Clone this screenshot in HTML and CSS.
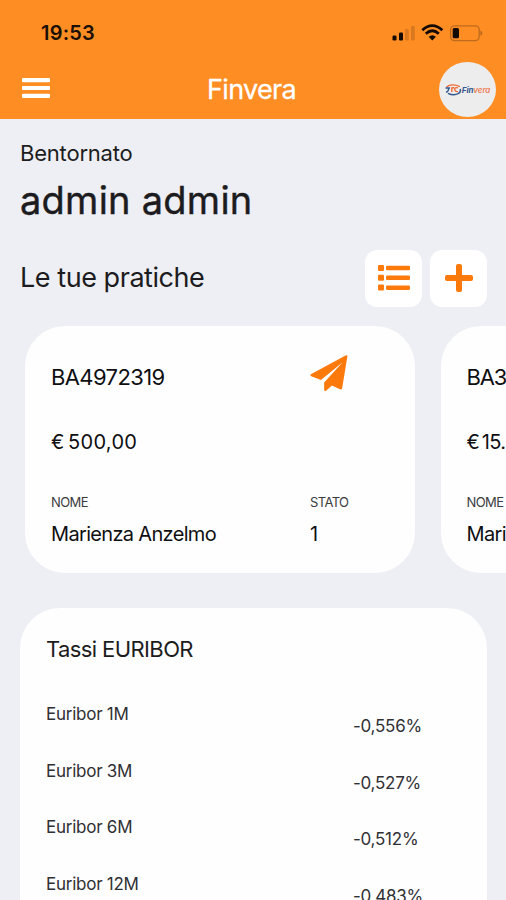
FILE: index.html
```html
<!DOCTYPE html>
<html lang="it">
<head>
<meta charset="utf-8">
<title>Finvera</title>
<link rel="stylesheet" href="styles.css">
</head>
<body>
<header class="header">
  <div class="status">
    <span class="clock">19:53</span>
    <svg class="status-icons" width="92" height="20" viewBox="0 0 92 20">
      <g fill="#130b03">
        <rect x="1.5" y="12.5" width="4" height="5" rx="1.3"/>
        <rect x="8" y="9.5" width="4" height="8" rx="1.2"/>
      </g>
      <g fill="#d8781f">
        <rect x="14" y="6" width="3.7" height="11.5" rx="1.2"/>
        <rect x="20" y="3" width="3.7" height="14.5" rx="1.2"/>
      </g>
      <g fill="none" stroke="#130b03" stroke-width="2.8">
        <path d="M31.3 7.3Q41.3-2 51.3 7.3"/>
        <path d="M34.8 10.8Q41.3 4.8 47.8 10.8"/>
      </g>
      <path d="M37.7 13.7Q41.3 10.7 44.9 13.7L41.3 17.4Z" fill="#130b03"/>
      <rect x="59.6" y="2.8" width="28.6" height="14.8" rx="4" fill="none" stroke="#bd6a1d" stroke-width="1.3"/>
      <rect x="61.7" y="5" width="6.3" height="10.2" rx="1.5" fill="#130b03"/>
      <path d="M89.4 7.5v5.4q1.9-.8 1.9-2.7t-1.9-2.7Z" fill="#bd6a1d"/>
    </svg>
  </div>
  <nav class="nav">
    <svg class="burger" width="28" height="20" viewBox="0 0 28 20" fill="#fff">
      <rect width="28" height="4.2" rx="1"/><rect y="7.9" width="28" height="4.2" rx="1"/><rect y="15.8" width="28" height="4.2" rx="1"/>
    </svg>
    <h1 class="title">Finvera</h1>
    <div class="avatar">
      <svg width="17" height="12" viewBox="0 0 17 12" fill="none">
        <path d="M1.5 3Q4.5.6 8.5.9T14.8 2.7" stroke="#ee6b35" stroke-width="1.4"/>
        <path d="M.5 4H5M3.8 4Q3.4 8 1 8.2" stroke="#31588f" stroke-width="1.5"/>
        <path d="M6.8 3.2V8M6.8 3.8H9M12.8 3.7Q9.3 3.1 9.7 5.5T13 7.6" stroke="#ee6b35" stroke-width="1.4"/>
        <path d="M3 9.3Q8.5 12 13.2 9.7Q16.2 8 15.2 5" stroke="#31588f" stroke-width="1.5"/>
      </svg>
      <span class="brand">Fin<b>vera</b></span>
    </div>
  </nav>
</header>
<main>
  <p class="welcome">Bentornato</p>
  <h2 class="user">admin admin</h2>
  <div class="section-head">
    <h3 class="section-title">Le tue pratiche</h3>
    <div class="actions">
      <button class="action" aria-label="Elenco">
        <svg width="32" height="26" viewBox="0 0 32 26" fill="#fc7a0c">
          <rect width="6" height="6" rx="1"/><rect y="9.8" width="6" height="6" rx="1"/><rect y="19.6" width="6" height="6" rx="1"/>
          <rect x="8" y=".8" width="24" height="4.5" rx="1.3"/><rect x="8" y="10.6" width="24" height="4.5" rx="1.3"/><rect x="8" y="20.4" width="24" height="4.5" rx="1.3"/>
        </svg>
      </button>
      <button class="action" aria-label="Aggiungi">
        <svg width="28" height="28" viewBox="0 0 28 28" fill="#fc7a0c">
          <rect x="11" width="6" height="28" rx="2"/><rect y="11" width="28" height="6" rx="2"/>
        </svg>
      </button>
    </div>
  </div>
  <div class="cards">
    <article class="card">
      <div class="card-top">
        <span class="code">BA4972319</span>
        <svg class="plane" width="38" height="37" viewBox="0 0 39 38" fill="#fc7a0c">
          <path d="M37.3.2Q38.8.1 38.3 2L33 34.2Q32.5 36 30.8 35.2L22.5 31.4L16.5 36.7Q14.6 37.6 14.5 35.6V28.3L33.5 7.4L11.2 25.8L1.3 21.8Q-.6 20.7 1.3 19.6L36 .7Z"/>
        </svg>
      </div>
      <div class="amount">€ 500,00</div>
      <div class="fields">
        <div class="field"><span class="label">NOME</span><span class="value">Marienza Anzelmo</span></div>
        <div class="field"><span class="label">STATO</span><span class="value">1</span></div>
      </div>
    </article>
    <article class="card next">
      <div class="card-top"><span class="code">BA3</span></div>
      <div class="amount">€ 15.</div>
      <div class="fields">
        <div class="field"><span class="label">NOME</span><span class="value">Mari</span></div>
      </div>
    </article>
  </div>
  <section class="rates">
    <h3 class="rates-title">Tassi EURIBOR</h3>
    <div class="rate"><span class="rate-name">Euribor 1M</span><span class="rate-value">-0,556%</span></div>
    <div class="rate"><span class="rate-name">Euribor 3M</span><span class="rate-value">-0,527%</span></div>
    <div class="rate"><span class="rate-name">Euribor 6M</span><span class="rate-value">-0,512%</span></div>
    <div class="rate"><span class="rate-name">Euribor 12M</span><span class="rate-value">-0,483%</span></div>
  </section>
</main>
</body>
</html>
```
FILE: styles.css
```css
* { box-sizing: border-box; }
html, body { height: 900px; overflow: hidden; }
body {
  margin: 0;
  background: #eeeff4;
  color: #1c1c20;
  font-family: Inter, "Liberation Sans", sans-serif;
  white-space: nowrap;
}
h1, h2, h3, p { margin: 0; font-weight: 400; }
svg { display: block; flex: none; }
.header { height: 118.5px; background: #fe8d23; }
.status {
  height: 61px;
  padding: 4px 23px 0 41px;
  display: flex;
  justify-content: space-between;
  align-items: center;
}
.clock { font-size: 20px; font-weight: 600; color: #1b1006; letter-spacing: .2px; }
.nav {
  height: 57px;
  padding: 0 10px 0 22px;
  display: grid;
  grid-template-columns: 140px 1fr 57px;
  align-items: center;
  color: #fff;
}
.burger { margin-top: -3px; }
.title {
  font-size: 27px;
  line-height: 56px;
  text-align: center;
  padding-right: 98px;
  letter-spacing: -.7px;
  -webkit-text-stroke: .3px;
}
.avatar {
  width: 57px;
  height: 55px;
  border-radius: 50%;
  background: #ededee;
  display: flex;
  align-items: center;
  justify-content: center;
}
.brand { font-size: 8px; font-weight: 700; font-style: italic; color: #31588f; letter-spacing: -.1px; }
.brand b { color: #ee8058; font-weight: 600; }
main { padding: 19.5px 19px 0 20px; }
.welcome { font-size: 22px; line-height: 30px; letter-spacing: -.2px; }
.user { font-size: 38px; line-height: 64px; letter-spacing: .25px; -webkit-text-stroke: .4px; }
.section-head {
  margin-top: 17px;
  height: 58px;
  display: flex;
  align-items: center;
  justify-content: space-between;
}
.section-title { font-size: 27px; letter-spacing: -.45px; margin-top: -1px; }
.actions { display: flex; gap: 8px; }
.action {
  width: 57px;
  height: 57px;
  padding: 0;
  border: 0;
  border-radius: 12px;
  background: #fff;
  display: flex;
  align-items: center;
  justify-content: center;
}
.cards { margin: 19px -19px 0 5px; display: flex; gap: 25.5px; overflow: hidden; }
.card {
  flex: none;
  width: 390px;
  height: 247px;
  padding: 26px;
  border-radius: 40px;
  background: #fefefe;
  color: #0f0f12;
}
.card-top { height: 50px; display: grid; grid-template-columns: 259px 1fr; align-items: center; }
.code { font-size: 22px; letter-spacing: -.6px; }
.plane { margin-top: -7px; }
.amount { margin-top: 25px; font-size: 20px; line-height: 30px; letter-spacing: .3px; word-spacing: -2.5px; }
.next .code { letter-spacing: -1.2px; }
.next .amount { letter-spacing: -.6px; word-spacing: -2.5px; }
.fields { margin-top: 34px; display: grid; grid-template-columns: 259px 1fr; }
.field { display: flex; flex-direction: column; }
.label { font-size: 13px; line-height: 22px; letter-spacing: -.6px; color: #3c3c40; }
.value { font-size: 20px; line-height: 42px; letter-spacing: -.67px; }
.rates {
  margin-top: 35px;
  height: 330px;
  padding: 25px 26px;
  border-radius: 40px 40px 0 0;
  background: #fefefe;
}
.rates-title { font-size: 22px; line-height: 32px; margin-bottom: 36px; letter-spacing: -.6px; }
.rate {
  height: 56.7px;
  display: grid;
  grid-template-columns: 307px 1fr;
  font-size: 17px;
  line-height: 26px;
  color: #303034;
  letter-spacing: -.25px;
}
.rate-value { padding-top: 12px; }
```
